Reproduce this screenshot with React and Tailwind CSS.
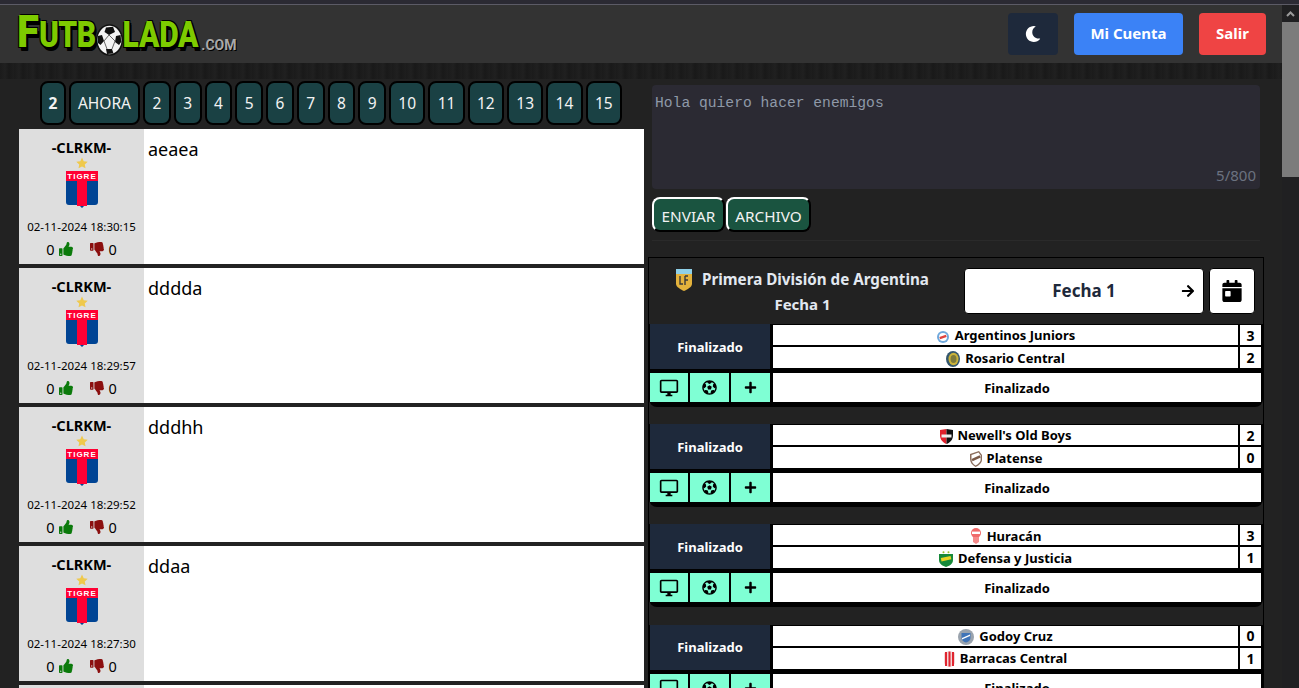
import React from 'react';
import { FaMoon, FaThumbsUp, FaThumbsDown, FaCalendarDay, FaFutbol, FaPlus, FaArrowRight } from 'react-icons/fa';
import { MdOutlineDesktopWindows } from 'react-icons/md';

const tabs = ['2', '3', '4', '5', '6', '7', '8', '9', '10', '11', '12', '13', '14', '15'];

const posts = [
  { text: 'aeaea', date: '02-11-2024 18:30:15' },
  { text: 'dddda', date: '02-11-2024 18:29:57' },
  { text: 'dddhh', date: '02-11-2024 18:29:52' },
  { text: 'ddaa', date: '02-11-2024 18:27:30' },
  { text: '', date: '' },
];

const matches = [
  { home: 'Argentinos Juniors', homeGoals: 3, away: 'Rosario Central', awayGoals: 2 },
  { home: "Newell's Old Boys", homeGoals: 2, away: 'Platense', awayGoals: 0 },
  { home: 'Huracán', homeGoals: 3, away: 'Defensa y Justicia', awayGoals: 1 },
  { home: 'Godoy Cruz', homeGoals: 0, away: 'Barracas Central', awayGoals: 1 },
];

// little club badges, drawn by hand
function Crest({ team }) {
  if (team === 'Argentinos Juniors') {
    return (
      <svg width="14" height="15" viewBox="0 0 14 15" className="shrink-0">
        <circle cx="7" cy="8" r="6" fill="#6fa8dc" />
        <circle cx="7" cy="8" r="4" fill="#fff" />
        <rect x="3.5" y="6.8" width="7" height="2.4" fill="#e0453f" transform="rotate(-20 7 8)" />
      </svg>
    );
  }
  if (team === 'Rosario Central') {
    return (
      <svg width="14" height="16" viewBox="0 0 14 16" className="shrink-0">
        <ellipse cx="7" cy="8" rx="7" ry="8" fill="#33566e" />
        <ellipse cx="7.5" cy="8" rx="5" ry="6.2" fill="#c9b23a" />
        <ellipse cx="7.5" cy="8" rx="3" ry="4" fill="#7d7a3a" />
      </svg>
    );
  }
  if (team === "Newell's Old Boys") {
    return (
      <svg width="13" height="15" viewBox="0 0 13 15" className="shrink-0">
        <path d="M0 1 L6.5 0 V15 C3 13.5 0 11 0 6 Z" fill="#e0202c" />
        <path d="M13 1 L6.5 0 V15 C10 13.5 13 11 13 6 Z" fill="#111" />
        <rect x="1.5" y="5.5" width="10" height="3" fill="#eee" />
      </svg>
    );
  }
  if (team === 'Platense') {
    return (
      <svg width="13" height="16" viewBox="0 0 13 16" className="shrink-0">
        <path d="M1 3 L10 0 L13 4 V9 C13 12 9 15 6.5 16 C3 14 1 11 1 8 Z" fill="#8a6d5c" />
        <path d="M2.5 4 L9.5 1.6 L11.6 4.6 V9 C11.6 11 9 13.4 6.5 14.4 C4 13 2.5 10.6 2.5 8 Z" fill="#fff" />
        <rect x="2.5" y="6" width="9" height="2.6" fill="#7a5a48" transform="rotate(-25 7 7)" />
      </svg>
    );
  }
  if (team === 'Huracán') {
    return (
      <svg width="12" height="16" viewBox="0 0 12 16" className="shrink-0">
        <circle cx="6" cy="5" r="5" fill="#f06a6a" />
        <rect x="2" y="3.6" width="8" height="2.4" fill="#fff" />
        <path d="M3 9 H9 V14 L6 16 L3 14 Z" fill="#f58a8a" />
      </svg>
    );
  }
  if (team === 'Defensa y Justicia') {
    return (
      <svg width="14" height="16" viewBox="0 0 14 16" className="shrink-0">
        <circle cx="4.5" cy="1.2" r="1" fill="#9bbf2b" />
        <circle cx="9.5" cy="1.2" r="1" fill="#9bbf2b" />
        <path d="M0 3 H14 V9 C14 13 10 15 7 16 C4 15 0 13 0 9 Z" fill="#178a3a" />
        <rect x="2" y="6" width="10" height="3.4" fill="#e9d323" transform="rotate(-12 7 7.5)" />
      </svg>
    );
  }
  if (team === 'Godoy Cruz') {
    return (
      <svg width="16" height="16" viewBox="0 0 16 16" className="shrink-0">
        <circle cx="8" cy="8" r="8" fill="#9aa3ad" />
        <path d="M3.5 4 H12.5 V9 C12.5 11.5 10 13 8 13.5 C6 13 3.5 11.5 3.5 9 Z" fill="#3f74b8" />
        <path d="M4 9 L12 5.5 V7 L4 10.5 Z" fill="#fff" />
      </svg>
    );
  }
  if (team === 'Barracas Central') {
    return (
      <svg width="11" height="16" viewBox="0 0 11 16" className="shrink-0">
        <path d="M0 2 C2 0 9 0 11 2 V11 C11 14 8 15.5 5.5 16 C3 15.5 0 14 0 11 Z" fill="#f3d6d6" />
        <rect x="1" y="1" width="2" height="14" fill="#e02530" />
        <rect x="4.5" y="0.5" width="2" height="15" fill="#e02530" />
        <rect x="8" y="1" width="2" height="14" fill="#e02530" />
      </svg>
    );
  }
  return null;
}

function TigreCrest() {
  return (
    <svg width="32" height="37" viewBox="0 0 32 37">
      <path d="M0 0 H32 V31 Q32 34 29 34 H19 L16 37 L13 34 H3 Q0 34 0 31 Z" fill="#004494" />
      <rect x="11" y="9" width="10" height="26" fill="#ff0033" />
      <rect width="32" height="10" fill="#ff0033" />
      <text x="16" y="8.2" textAnchor="middle" fontSize="8" fontWeight="700" fill="#fff" letterSpacing="1" fontFamily="Liberation Sans, sans-serif">TIGRE</text>
    </svg>
  );
}

function Ball() {
  return (
    <svg width="27" height="32" viewBox="0 0 27 32" className="shrink-0 mb-[1px]">
      <ellipse cx="13.5" cy="16" rx="13.5" ry="15.8" fill="#111" />
      <ellipse cx="13.5" cy="16" rx="12" ry="14.2" fill="#f4f4f4" />
      <path d="M10 3.5 L17 2.8 L19 8 L13 11 L8.5 8 Z" fill="#111" />
      <path d="M1.8 12 L6 11 L8 17 L4.5 21 L2 19 Z" fill="#111" />
      <path d="M24.6 11 L20 12 L19 18 L23 21 L25.2 18 Z" fill="#111" />
      <path d="M10 25 L16 25 L17.5 29.6 L11 30 Z" fill="#111" />
      <path d="M13 11 L8 17 M13 11 L19 17 M8 17 L11 25 M19 17 L16 25" stroke="#444" strokeWidth="0.8" />
    </svg>
  );
}

function Logo() {
  return (
    <div className="flex items-end ml-[17px] mt-[3px] h-[42px] font-['Roboto',sans-serif] font-black text-[#7ecb00] leading-none [text-shadow:2px_2px_0_#000,-1px_1px_0_#000,1px_-1px_0_#000,2px_3px_0_#000]">
      <span className="inline-block text-[40px] mb-[2px] origin-bottom scale-y-[1.1]">F</span>
      <span className="inline-block text-[30px] mb-[4px] tracking-[-0.5px] origin-bottom scale-y-[1.25]">UTB</span>
      <Ball />
      <span className="inline-block text-[30px] mb-[4px] tracking-[-0.2px] origin-bottom scale-y-[1.25]">LADA</span>
      <span className="text-[14px] mb-[5px] ml-[3px] text-[#a9a9a9] font-bold [text-shadow:1px_1px_0_#000]">.COM</span>
    </div>
  );
}

function Header() {
  return (
    <div className="flex items-center justify-between h-[58px] bg-[#333333] pr-4">
      <Logo />
      <div className="flex items-center gap-4 mt-[-1px]">
        <button className="flex items-center justify-center w-[50px] h-[42px] rounded bg-[#1e293b] text-white">
          <FaMoon className="text-[16px]" />
        </button>
        <button className="w-[109px] h-[42px] rounded bg-[#3b82f6] text-white text-[15px] font-bold">Mi Cuenta</button>
        <button className="w-[67px] h-[42px] rounded bg-[#ef4444] text-white text-[15px] font-bold">Salir</button>
      </div>
    </div>
  );
}

function Tab({ label, className }) {
  return (
    <button className={`h-[44px] pt-[2px] rounded-lg border-[2px] border-black bg-[#1a4144] text-[15.5px] text-[#f2f2f2] ${className}`}>
      {label}
    </button>
  );
}

function Post({ post }) {
  return (
    <div className="flex h-[135px] shrink-0 mb-[4px] bg-white">
      <div className="flex flex-col items-center w-[125px] bg-[#dedede] text-black pt-[9px]">
        {post.date && (
          <>
            <div className="text-[14.5px] font-bold leading-[18px]">-CLRKM-</div>
            <svg width="12" height="12" viewBox="0 0 24 24" className="mt-[1px]">
              <path d="M12 1 L15.4 8.3 L23.4 9.3 L17.5 14.8 L19 22.7 L12 18.8 L5 22.7 L6.5 14.8 L0.6 9.3 L8.6 8.3 Z" fill="#efc94c" />
            </svg>
            <div className="mt-[2px]"><TigreCrest /></div>
            <div className="text-[11.5px] leading-[16px] mt-[11px] whitespace-nowrap">{post.date}</div>
            <div className="flex items-center mt-[5px] text-[14.5px] leading-[18px]">
              <span>0</span>
              <FaThumbsUp className="ml-[4px] text-[14px] text-[#0b7a0b]" />
              <FaThumbsDown className="ml-[17px] text-[14px] text-[#8b0f0f]" />
              <span className="ml-[5px]">0</span>
            </div>
          </>
        )}
      </div>
      <div className="flex-1 px-1 pt-[6px] text-[18px] leading-[28px] text-black">{post.text}</div>
    </div>
  );
}

function TeamRow({ team, goals, className }) {
  return (
    <div className={`flex bg-black gap-[2px] ${className}`}>
      <div className="flex flex-1 items-center justify-center gap-[5px] pt-[2px] bg-white text-black text-[13px] font-bold">
        <Crest team={team} />
        <span>{team}</span>
      </div>
      <div className="flex items-center justify-center w-[21px] bg-white text-black text-[14px] font-bold">{goals}</div>
    </div>
  );
}

function Match({ match }) {
  return (
    <div className="bg-black rounded-b-lg pl-[1px] pr-[2px] pb-[5px] mb-[17.2px]">
      <div className="flex gap-[3px]">
        <div className="flex items-center justify-center w-[120px] h-[45px] pt-[2px] bg-[#1e293b] text-white text-[13px] font-bold">Finalizado</div>
        <div className="flex flex-1 flex-col gap-[2px] pt-[1px]">
          <TeamRow team={match.home} goals={match.homeGoals} className="h-[20px]" />
          <TeamRow team={match.away} goals={match.awayGoals} className="h-[21px]" />
        </div>
      </div>
      <div className="flex gap-[3px] mt-[4px]">
        <div className="flex w-[120px] h-[29px] gap-[2px] text-black">
          <div className="flex w-[38px] items-center justify-center bg-[#7fffd4]"><MdOutlineDesktopWindows className="text-[20px]" /></div>
          <div className="flex flex-1 items-center justify-center bg-[#7fffd4]"><FaFutbol className="text-[15px]" /></div>
          <div className="flex w-[39px] items-center justify-center bg-[#7fffd4]"><FaPlus className="text-[13px]" /></div>
        </div>
        <div className="flex flex-1 items-center justify-center pt-[2px] bg-white text-black text-[13px] font-bold">Finalizado</div>
      </div>
    </div>
  );
}

function LpfBadge() {
  return (
    <svg width="16" height="22" viewBox="0 0 16 22" className="shrink-0">
      <rect width="16" height="5" fill="#8fd0e8" />
      <path d="M0 5 H16 V15 C16 18 11 20.5 8 22 C5 20.5 0 18 0 15 Z" fill="#e3b23c" />
      <path d="M4 7 V15 H7 M9 7 V16 M9 7 H12 M9 11 H12" stroke="#3a3a3a" strokeWidth="1.4" fill="none" />
    </svg>
  );
}

export default function App() {
  return (
    <div className="flex h-[688px] overflow-hidden bg-[#222222] font-['Noto_Sans',sans-serif]">
      <div className="flex flex-col flex-1 min-w-0">
        <div className="h-[5px] shrink-0 bg-[#2b2a33] border-b border-[#5c5b66]" />
        <Header />
        <div className="h-[16px] shrink-0 bg-[#1c1c1c] bg-[repeating-linear-gradient(90deg,#1b1b1b_0px,#202020_5px,#191919_9px,#1e1e1e_14px)]" />

        <div className="flex flex-1 min-h-0 overflow-hidden pl-[19px]">
          {/* foro */}
          <div className="flex flex-col w-[625px] shrink-0">
            <div className="flex gap-[3px] pl-[21px] pt-[2px] mb-[4px]">
              <Tab label="2" className="w-[26px] font-bold" />
              <Tab label="AHORA" className="w-[71px]" />
              {tabs.map((t, i) => <Tab key={i} label={t} className="min-w-[27.75px] px-[7.3px]" />)}
            </div>
            {posts.map((p, i) => <Post key={i} post={p} />)}
          </div>

          {/* columna derecha */}
          <div className="flex flex-col w-[616px] ml-[4px] shrink-0">
            <div className="relative shrink-0 h-[104px] mx-[4px] mt-[6px] rounded-sm bg-[#2b2a33] px-[3px] py-[8px] font-['Liberation_Mono',monospace] text-[14.67px] leading-[20px] text-[#8f99a8]">
              Hola quiero hacer enemigos
              <span className="absolute right-[4px] bottom-[4px] font-['Noto_Sans',sans-serif] text-[15px] text-[#6b7280]">5/800</span>
            </div>
            <div className="flex shrink-0 gap-[1px] mx-[4px] mt-[8px] pb-[8px] border-b border-[#2a2a2a]">
              <button className="h-[35px] w-[73px] pt-[3px] rounded-lg border-2 border-t-white border-l-white border-r-black border-b-black bg-[#1a5440] text-[15.3px] text-[#f2f2f2]">ENVIAR</button>
              <button className="h-[35px] w-[85px] pt-[3px] rounded-lg border-2 border-t-white border-l-white border-r-black border-b-black bg-[#1a5440] text-[15.3px] text-[#f2f2f2]">ARCHIVO</button>
            </div>

            <div className="shrink-0 mt-[16px] border border-black border-b-0">
              <div className="flex h-[66px] pr-[8px]">
                <div className="flex flex-col items-center w-[307px] mr-[8px] pt-[9px] text-[15.2px] font-bold text-[#e2e8f0]">
                  <div className="flex items-center gap-[10px] h-[25px]">
                    <LpfBadge />
                    <span>Primera División de Argentina</span>
                  </div>
                  <div className="mt-[1px] text-[15px]">Fecha 1</div>
                </div>
                <div className="relative flex items-center justify-center w-[240px] h-[46px] mt-[10px] rounded bg-white border border-black text-[17px] font-bold text-[#1e293b]">
                  Fecha 1
                  <FaArrowRight className="absolute right-[8px] text-[14px] text-black" />
                </div>
                <div className="flex items-center justify-center w-[46px] h-[46px] mt-[10px] ml-[5px] rounded bg-white border border-black text-black">
                  <FaCalendarDay className="text-[22px]" />
                </div>
              </div>
              {matches.map((m, i) => <Match key={i} match={m} />)}
            </div>
          </div>
        </div>
      </div>

      {/* barra de scroll */}
      <div className="flex flex-col w-[17px] shrink-0 bg-[#202022]">
        <div className="h-[5px] bg-[#2b2a33] border-b border-[#5c5b66]" />
        <div className="flex items-center justify-center h-[17px] text-[#9a9a9a]">
          <svg width="9" height="6" viewBox="0 0 9 6"><path d="M1 5 L4.5 1.5 L8 5" stroke="currentColor" strokeWidth="2" fill="none" /></svg>
        </div>
        <div className="h-[155px] bg-[#7c7c7c]" />
      </div>
    </div>
  );
}
